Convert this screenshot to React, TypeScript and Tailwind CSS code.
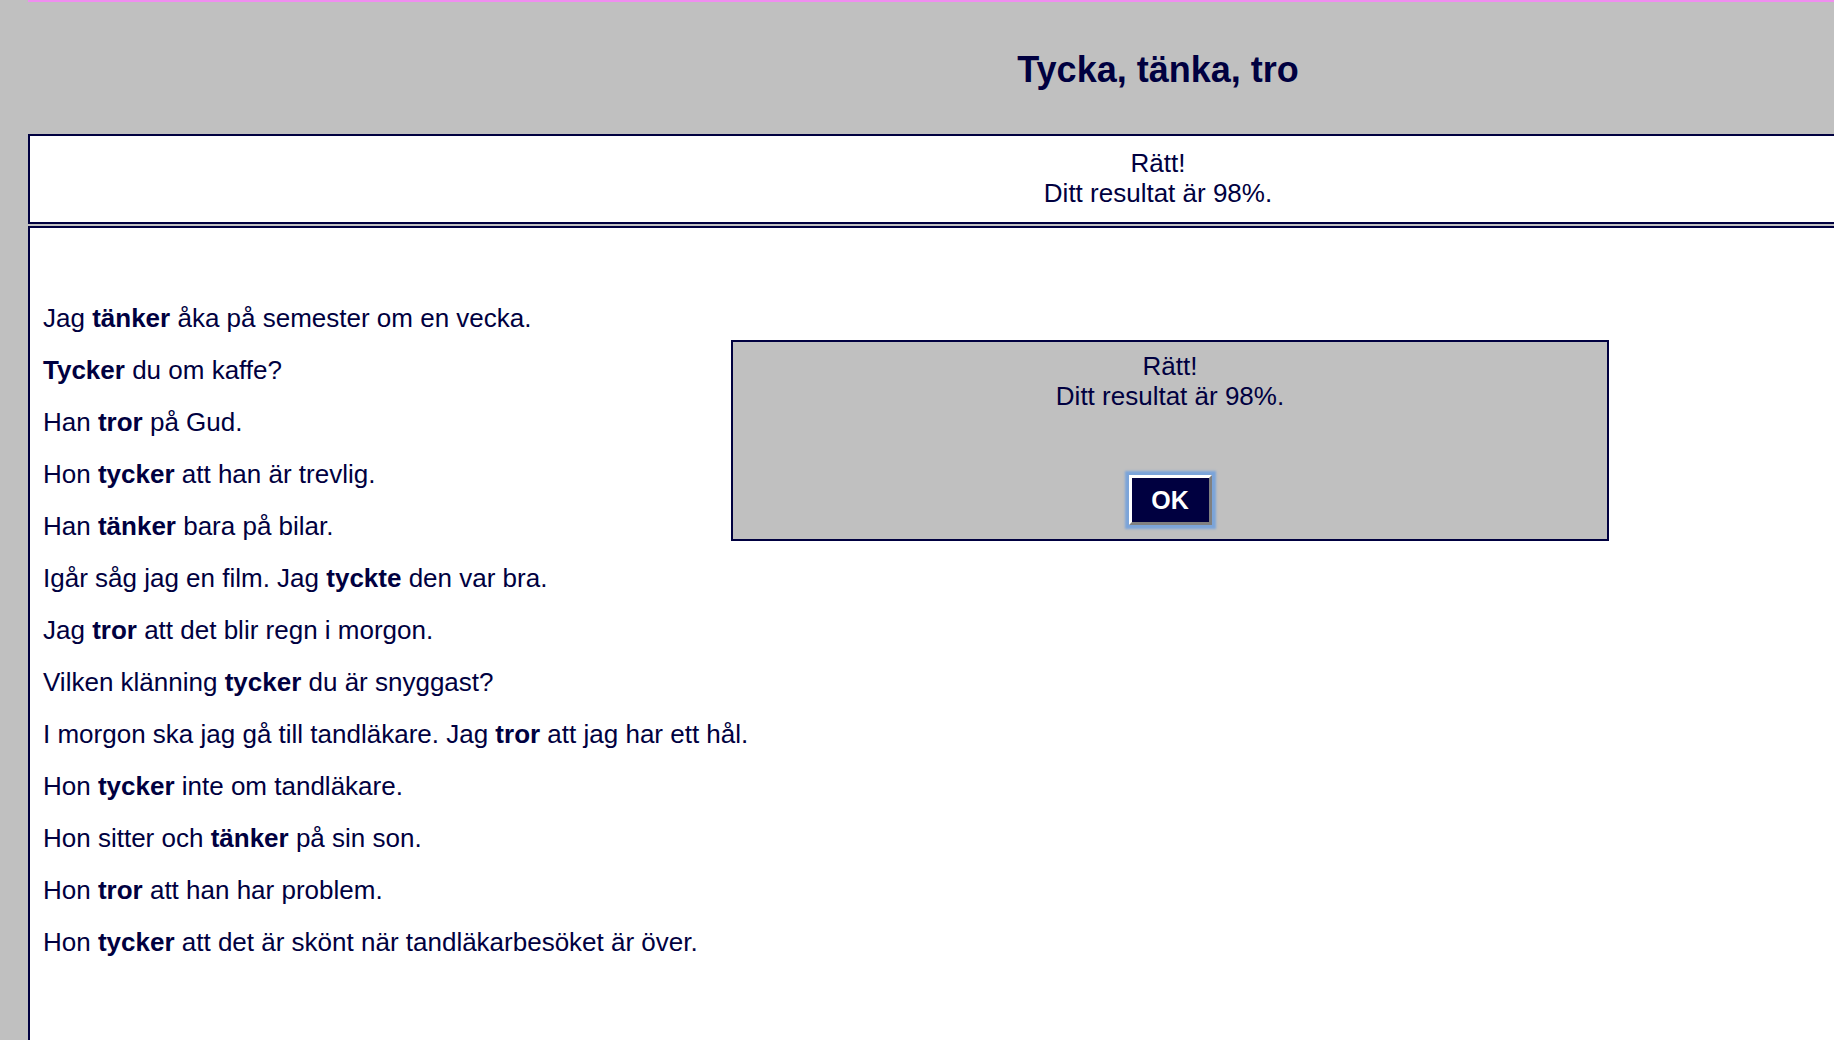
import React from "react";

type Part = { text: string; bold?: boolean };

// each sentence is split into plain and bold runs
const sentences: Part[][] = [
  [{ text: "Jag " }, { text: "tänker", bold: true }, { text: " åka på semester om en vecka." }],
  [{ text: "Tycker", bold: true }, { text: " du om kaffe?" }],
  [{ text: "Han " }, { text: "tror", bold: true }, { text: " på Gud." }],
  [{ text: "Hon " }, { text: "tycker", bold: true }, { text: " att han är trevlig." }],
  [{ text: "Han " }, { text: "tänker", bold: true }, { text: " bara på bilar." }],
  [{ text: "Igår såg jag en film. Jag " }, { text: "tyckte", bold: true }, { text: " den var bra." }],
  [{ text: "Jag " }, { text: "tror", bold: true }, { text: " att det blir regn i morgon." }],
  [{ text: "Vilken klänning " }, { text: "tycker", bold: true }, { text: " du är snyggast?" }],
  [{ text: "I morgon ska jag gå till tandläkare. Jag " }, { text: "tror", bold: true }, { text: " att jag har ett hål." }],
  [{ text: "Hon " }, { text: "tycker", bold: true }, { text: " inte om tandläkare." }],
  [{ text: "Hon sitter och " }, { text: "tänker", bold: true }, { text: " på sin son." }],
  [{ text: "Hon " }, { text: "tror", bold: true }, { text: " att han har problem." }],
  [{ text: "Hon " }, { text: "tycker", bold: true }, { text: " att det är skönt när tandläkarbesöket är över." }],
];

const Feedback = () => (
  <>
    <div>Rätt!</div>
    <div>Ditt resultat är 98%.</div>
  </>
);

const App = () => {
  return (
    <div className="relative w-[1834px] h-[1040px] overflow-hidden bg-[#c0c0c0] text-[#000040] font-['Liberation_Sans',Arial,Helvetica,sans-serif]">
      <div className="ml-[28px] w-[2260px]">
        <div className="h-[2px] bg-[#f08ef0]" />

        <header className="h-[132px] pt-[47px] text-center">
          <h1 className="text-[36px] leading-[42px] font-bold">Tycka, tänka, tro</h1>
        </header>

        <div className="h-[90px] border-2 border-[#000040] bg-white pt-[12px] text-center text-[26px] leading-[30px]">
          <Feedback />
        </div>

        <div className="mt-[2px] h-[1200px] border-2 border-[#000040] bg-white pl-[13px] pt-[75px] text-[26px] leading-[30px]">
          {sentences.map((parts, i) => (
            <p key={i} className="mb-[22px] whitespace-nowrap">
              {parts.map((p, j) =>
                p.bold ? (
                  <b key={j} className="font-bold">
                    {p.text}
                  </b>
                ) : (
                  <span key={j}>{p.text}</span>
                )
              )}
            </p>
          ))}
        </div>
      </div>

      {/* feedback dialog over the exercise */}
      <div className="absolute left-[731px] top-[340px] w-[878px] h-[201px] border-2 border-[#000040] bg-[#c0c0c0] flex flex-col items-center pt-[9px] text-[26px] leading-[30px]">
        <Feedback />
        <button className="mt-[64px] w-[83px] h-[50px] border-[3px] border-t-white border-l-white border-r-[#808080] border-b-[#808080] bg-[#000040] text-white text-[25px] font-bold leading-none shadow-[0_0_2px_4px_rgba(100,155,225,0.75)]">
          OK
        </button>
      </div>
    </div>
  );
};

export default App;
